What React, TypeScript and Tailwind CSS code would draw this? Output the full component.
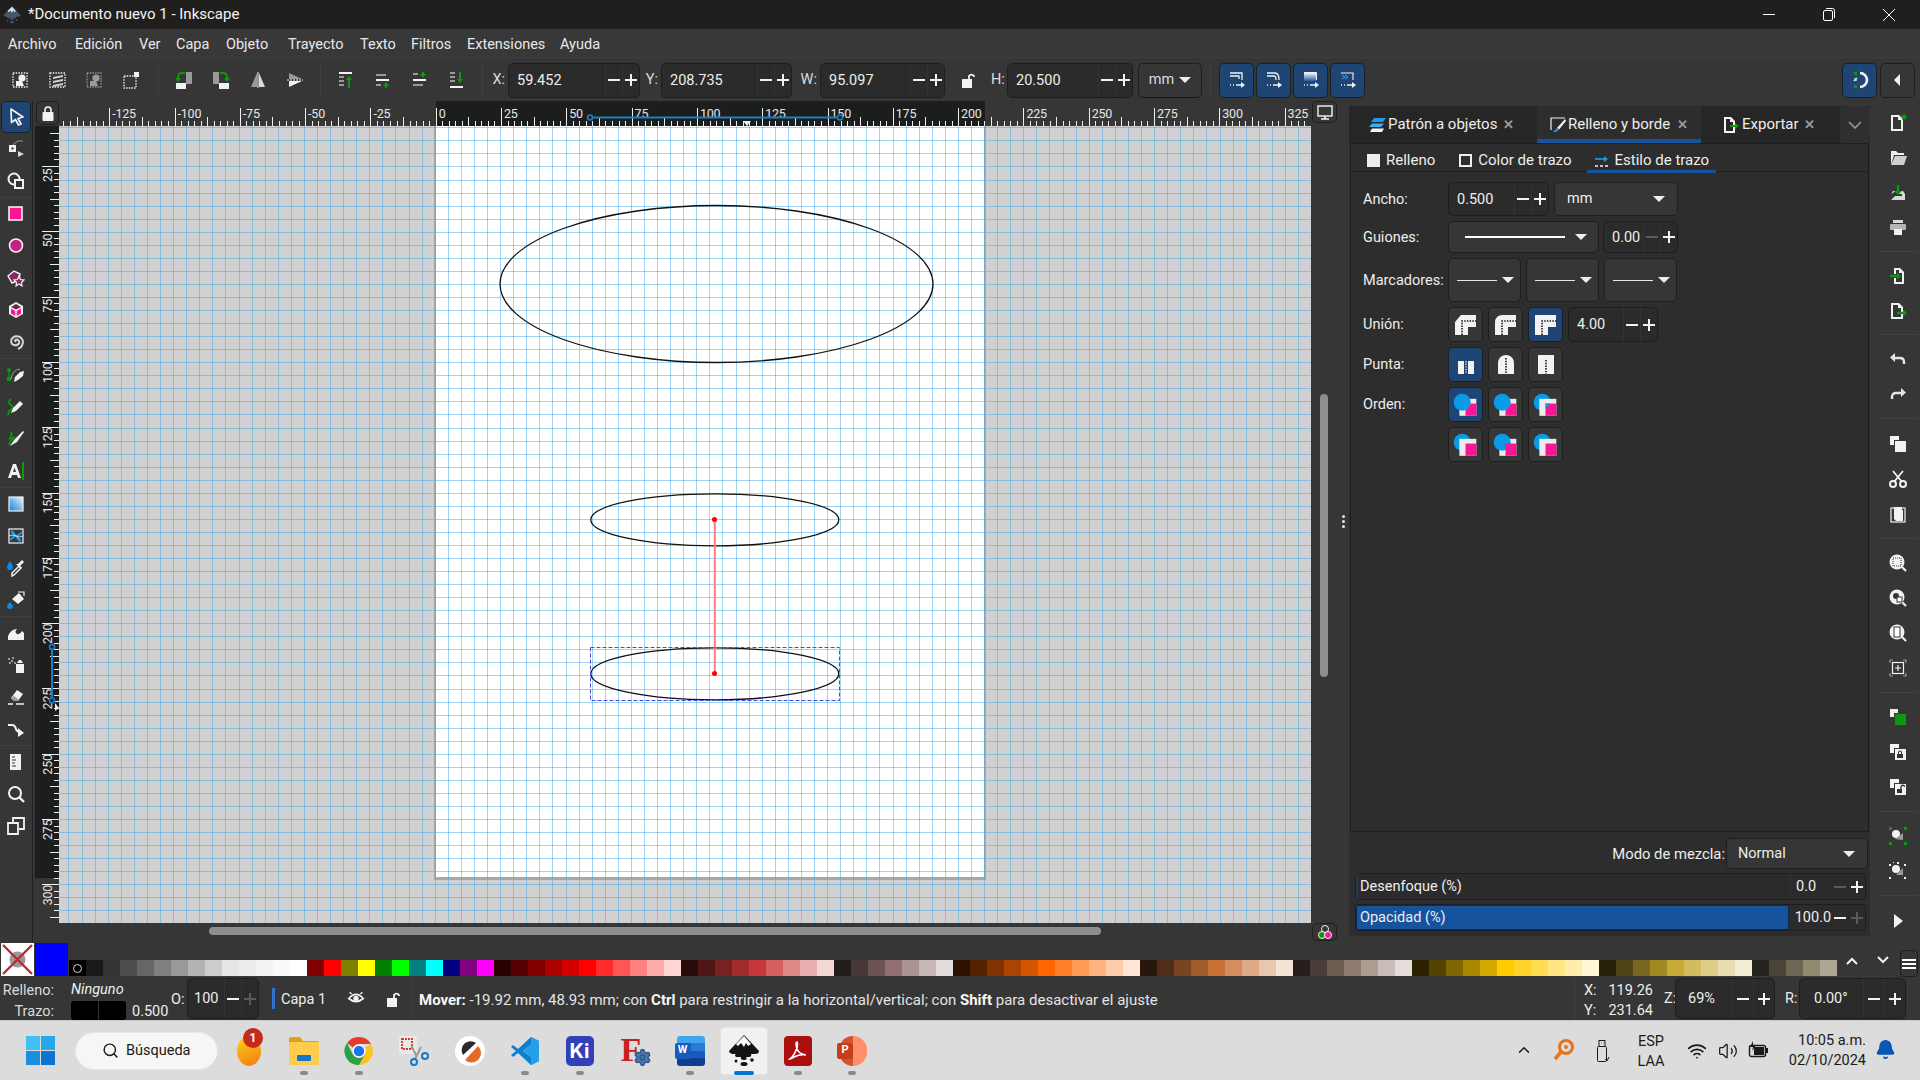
import React from 'react';
import { ChevronUp, Wifi, Volume2, Bell, Search, Settings } from 'lucide-react';

const W = '#f2f2f2';
const G = '#0a9a0a';
const GR = '#9a9a9a';

const Ico: React.FC<{ s?: number; children: React.ReactNode; v?: number }> = ({ s = 20, v = 20, children }) => (
  <svg width={s} height={s} viewBox={`0 0 ${v} ${v}`} fill="none">{children}</svg>
);

const Minus = ({ dim }: { dim?: boolean }) => (
  <div className={`w-[12px] h-[2px] ${dim ? 'bg-[#5a5a5a]' : 'bg-[#f2f2f2]'}`} />
);
const Plus = ({ dim }: { dim?: boolean }) => (
  <div className="relative w-[12px] h-[12px] flex items-center justify-center">
    <div className={`w-[12px] h-[2px] ${dim ? 'bg-[#5a5a5a]' : 'bg-[#f2f2f2]'}`} />
    <div className={`absolute w-[2px] h-[12px] ${dim ? 'bg-[#5a5a5a]' : 'bg-[#f2f2f2]'}`} />
  </div>
);

const Spin: React.FC<{ value: string; w: string; h?: string; pad?: string; cell?: string; decDim?: boolean; incDim?: boolean }> = ({ value, w, h = 'h-[35px]', pad = 'pl-[8px]', cell = 'w-[17px]', decDim, incDim }) => (
  <div className={`${w} ${h} flex items-stretch shrink-0 rounded-[5px] border border-[#1e1e1e] bg-[#2b2b2b] text-[14.5px] text-[#eeeeec]`}>
    <div className={`flex-1 flex items-center ${pad} pt-px min-w-0`}>{value}</div>
    <div className={`${cell} flex items-center justify-center border-l border-[#333333]`}><Minus dim={decDim} /></div>
    <div className={`${cell} flex items-center justify-center border-l border-[#333333]`}><Plus dim={incDim} /></div>
  </div>
);

const Caret = () => <div className="w-0 h-0 border-l-[6px] border-r-[6px] border-t-[6px] border-l-transparent border-r-transparent border-t-[#eeeeec]" />;

const TbBtn: React.FC<{ children: React.ReactNode; on?: boolean; w?: string; h?: string }> = ({ children, on, w = 'w-[35px]', h = 'h-[35px]' }) => (
  <div className={`${w} ${h} shrink-0 rounded-[5px] border flex items-center justify-center ${on ? 'bg-[#1f4575] border-[#17202c]' : 'bg-[#363636] border-[#1e1e1e]'}`}>{children}</div>
);

const Dot = ({ x, y, w, h, o = 1 }: { x: number; y: number; w: number; h: number; o?: number }) => (
  <rect x={x} y={y} width={w} height={h} stroke={W} strokeWidth="1.3" strokeDasharray="1.5 1.2" opacity={o} />
);

/* --- top toolbar icons --- */
const topIcons: React.ReactNode[] = [
  <Ico key="a"><Dot x={2} y={3} w={14} h={14} /><circle cx="11" cy="8" r="3.6" fill={W} /><path d="M5 16 V11 H11 L13 16Z" fill={W} /></Ico>,
  <Ico key="b"><Dot x={2} y={3} w={15} h={14} /><path d="M5 7 L15 5 V7 L5 9Z M5 11 L15 9 V11 L5 13Z M5 15 L15 13 V15 L5 17Z" fill="#d0d0d0" /></Ico>,
  <Ico key="c"><Dot x={2} y={3} w={14} h={14} o={0.5} /><circle cx="11" cy="8" r="3.6" fill={GR} /><path d="M5 16 V11 H11 L13 16Z" fill={GR} /></Ico>,
  <Ico key="d"><Dot x={2} y={6} w={12} h={12} /><rect x="12" y="2" width="5" height="5" fill={W} /></Ico>,
  <Ico key="e"><rect x="12" y="2" width="6" height="12" fill={GR} /><rect x="2" y="13" width="10" height="6" fill={W} /><path d="M11 3 H7 Q4 3 4 9" stroke={G} strokeWidth="2" /><path d="M1 8 H7 L4 12Z" fill={G} /></Ico>,
  <Ico key="f"><rect x="2" y="2" width="6" height="12" fill={GR} /><rect x="8" y="13" width="10" height="6" fill={W} /><path d="M9 3 H13 Q16 3 16 9" stroke={G} strokeWidth="2" /><path d="M13 8 H19 L16 12Z" fill={G} /></Ico>,
  <Ico key="g"><path d="M9 3 V17 H3Z" fill={GR} /><path d="M11 3 V17 H17Z" fill="#dcdcdc" /><path d="M10 2 V18" stroke={W} strokeWidth="1" /></Ico>,
  <Ico key="h"><path d="M4 9 V3 L17 9Z" fill={GR} /><path d="M4 11 V17 L17 11Z" fill={W} /><path d="M2 10 H18" stroke={W} strokeWidth="1" strokeDasharray="2 1" /></Ico>,
  <Ico key="i"><rect x="3" y="2" width="13" height="2" fill={W} /><path d="M3 7 h5 M3 11 h5 M3 15 h5" stroke={GR} strokeWidth="2" /><path d="M13 18 V9" stroke={G} strokeWidth="2" /><path d="M10 10 L13 6 L16 10Z" fill={G} /></Ico>,
  <Ico key="j"><rect x="3" y="9" width="13" height="2" fill={W} /><rect x="3" y="4" width="10" height="2" fill={GR} /><path d="M3 15 h5" stroke={GR} strokeWidth="2" /><path d="M13 18 V15" stroke={G} strokeWidth="2" /><path d="M10 16 L13 12 L16 16Z" fill={G} /></Ico>,
  <Ico key="k"><rect x="3" y="9" width="13" height="2" fill={W} /><rect x="3" y="14" width="10" height="2" fill={GR} /><path d="M3 4 h5" stroke={GR} strokeWidth="2" /><path d="M13 2 V5" stroke={G} strokeWidth="2" /><path d="M10 4 L13 8 L16 4Z" fill={G} /></Ico>,
  <Ico key="l"><rect x="3" y="16" width="13" height="2" fill={W} /><path d="M3 3 h5 M3 7 h5 M3 11 h5" stroke={GR} strokeWidth="2" /><path d="M13 2 V10" stroke={G} strokeWidth="2" /><path d="M10 9 L13 13 L16 9Z" fill={G} /></Ico>,
];

const blueIcons: React.ReactNode[] = [
  <Ico key="a"><path d="M3 3 H15 V10 M3 6 H12 V9" stroke={W} strokeWidth="1.3" /><path d="M3 15 h1 m2 0 h1 m2 0 h6" stroke={W} strokeWidth="1.6" /><path d="M14 12 L18 15 L14 18Z" fill={W} /></Ico>,
  <Ico key="b"><path d="M3 3 H11 Q15 3 15 10 M3 6 H10 Q12 6 12 10" stroke={W} strokeWidth="1.3" /><path d="M3 15 h1 m2 0 h1 m2 0 h6" stroke={W} strokeWidth="1.6" /><path d="M14 12 L18 15 L14 18Z" fill={W} /></Ico>,
  <Ico key="c"><defs><linearGradient id="bg1" x1="0" y1="1" x2="0" y2="0"><stop offset="0" stopColor="#1e5fa8" /><stop offset="1" stopColor="#f2f2f2" /></linearGradient></defs><rect x="3" y="3" width="12" height="8" fill="url(#bg1)" /><path d="M3 2.5 H15.5 V10" stroke={W} strokeWidth="1" /><path d="M3 15 h1 m2 0 h1 m2 0 h6" stroke={W} strokeWidth="1.6" /><path d="M14 12 L18 15 L14 18Z" fill={W} /></Ico>,
  <Ico key="d"><path d="M3 3 H15 V10" stroke={W} strokeWidth="1.1" /><path d="M4 5 L7 7 L4 9 M7 5 L10 7 L7 9" stroke="#3ea3ea" strokeWidth="1" /><path d="M3 15 h1 m2 0 h1 m2 0 h6" stroke={W} strokeWidth="1.6" /><path d="M14 12 L18 15 L14 18Z" fill={W} /></Ico>,
];

/* --- left toolbar icons --- */
const leftGroups: React.ReactNode[][] = [
  [
    <Ico key="sel"><path d="M5 2 L17 10 L12 11.5 L15 17 L12.5 18 L9.5 12.5 L5.5 15.5Z" fill="#1f4575" stroke={W} strokeWidth="1.7" strokeLinejoin="round" /></Ico>,
    <Ico key="node"><rect x="3" y="6" width="7" height="7" fill={W} /><rect x="5.5" y="8.5" width="2" height="2" fill="#333" /><path d="M7 6 Q10 1 17 2" stroke={GR} strokeWidth="1" /><path d="M12 12 L18 15 L12 18Z" fill="#d8d8d8" /></Ico>,
    <Ico key="shp"><circle cx="8" cy="8" r="5.5" stroke={W} strokeWidth="2" /><rect x="9" y="9" width="8" height="8" fill="#333" stroke={W} strokeWidth="2" /></Ico>,
  ],
  [
    <Ico key="rect"><rect x="3" y="3" width="13" height="13" fill="#ff1493" stroke={W} strokeWidth="1.6" /></Ico>,
    <Ico key="ell"><circle cx="10" cy="9.5" r="6.5" fill="#c4207f" stroke={W} strokeWidth="1.6" /></Ico>,
    <Ico key="star"><path d="M2 8 L8 3 L14 6 L13 12 L6 15Z" fill="#8a2465" stroke={W} strokeWidth="1.4" /><path d="M13 8 L14.5 11.5 L18 12 L15.5 14.5 L16 18 L13 16 L10 18 L10.5 14.5 L8 12 L11.5 11.5Z" fill="#8a2465" stroke={W} strokeWidth="1.2" /></Ico>,
    <Ico key="box"><path d="M10 2 L17 6 V14 L10 18 L3 14 V6Z" fill={W} /><path d="M10 4 L15 7 L10 9.5 L5 7Z" fill="#702255" /><path d="M5 8.5 L9.3 11 V16 L5 13.5Z" fill="#ff1493" /><path d="M15 8.5 L10.7 11 V16 L15 13.5Z" fill="#ff1493" /></Ico>,
    <Ico key="spi"><path d="M10 10 Q8 8 10.5 7.5 Q14 8 13 11.5 Q10 15 6 12 Q3.5 7 8.5 4.5 Q15 3.5 17 9 Q17 15 12 17" stroke="#d5d5d5" strokeWidth="2" /></Ico>,
  ],
  [
    <Ico key="pen"><rect x="1" y="12" width="4" height="4" fill={G} /><circle cx="3" cy="5" r="2" fill={G} /><path d="M3 6 V13" stroke={G} strokeWidth="1.2" /><path d="M5 14 Q6 5 14 4" stroke={GR} strokeWidth="1" /><path d="M8 17 L9 12 L14 7 L18 6 L17 11 L12 15Z" fill={W} /></Ico>,
    <Ico key="pcl"><path d="M5 2 Q1 5 5 8 Q9 11 3 14 L2 18" stroke={G} strokeWidth="1.8" /><path d="M5 16 L7 11 L14 4 L17 7 L10 14Z" fill={W} /></Ico>,
    <Ico key="cal"><path d="M5 3 Q7 8 3 10 M9 8 Q5 10 3 16" stroke={G} strokeWidth="1.8" /><path d="M4 17 L8 11 L17 2 L18 3 L11 13Z" fill={W} /></Ico>,
    <svg key="txt" width="20" height="20" viewBox="0 0 20 20" fill="none"><path d="M7 3 H10 L15 17 H12 L11 14 H6 L5 17 H2Z M7 11 H10 L8.5 6.5Z" fill={W} fillRule="evenodd" /><rect x="16" y="1" width="2" height="18" fill={G} /></svg>,
  ],
  [
    <Ico key="grd"><defs><linearGradient id="lg2" x1="1" y1="0" x2="0" y2="1"><stop offset="0" stopColor="#e8f6ff" /><stop offset="1" stopColor="#0f7fd8" /></linearGradient></defs><rect x="3" y="3" width="14" height="14" fill="url(#lg2)" stroke={W} strokeWidth="1.2" /></Ico>,
    <Ico key="msh"><rect x="3" y="3" width="14" height="14" fill="#2f3a44" stroke={W} strokeWidth="1.2" /><path d="M10 10 Q5 9 6 5 Q9 8 10 10 Q15 8 15.5 6 Q14 10 10 10 Q15 12 14 15.5 Q11 13 10 10 Q6 12 4.5 14 Q6 10 10 10Z" fill="#2a9fe8" stroke="#2a9fe8" strokeWidth="1.2" /><path d="M3 10 Q7 8 10 10 Q13 12 17 10" stroke={W} strokeWidth="0.8" /></Ico>,
    <Ico key="drp"><path d="M4 3 Q7 7 7 9 A3 3 0 0 1 1 9 Q1 7 4 3Z" fill="#1089e0" /><path d="M6 18 L6 15 L13 8 L15 10 L8 17Z" stroke={W} strokeWidth="1.5" /><path d="M12 6 L16 2 L18 4 L14 8 L16 10 L14 10 L10 6Z" fill={W} /></Ico>,
    <Ico key="bkt"><path d="M4 12 Q7 16 7 16 A3 3 0 0 1 1 16 Q1 15 4 12Z" fill="#1089e0" /><path d="M6 9 L13 3 L18 9 L12 14Z" fill={W} /><path d="M12 2 H18 L18 6" stroke={W} strokeWidth="1.2" /></Ico>,
  ],
  [
    <Ico key="twk"><path d="M2 17 V13 Q5 6 11 6 Q8 9 11 11 Q14 12 16 8 L18 10 V17Z" fill={W} /></Ico>,
    <Ico key="spr"><rect x="10" y="9" width="8" height="9" fill={W} /><path d="M11 8 L13 5 H15 L17 8Z" fill={W} /><path d="M2 3 h2 v2 h-2z M5 5 h2 v2 h-2z M3 7 h2 v2 h-2z M6 2 h2 v2 h-2z M8 7 h2 v2 h-2z" fill={GR} /></Ico>,
    <Ico key="ers"><path d="M5 11 L11 3 L17 7 L12 14 L8 14Z" fill={W} /><path d="M5 11 L8 14 L12 14 L13 13 L8 9Z" fill={GR} /><path d="M2 17 H7 M10 17 H18" stroke={W} strokeWidth="1.4" /></Ico>,
    <Ico key="con"><path d="M2 6 H6 Q9 6 10 10 Q11 13 14 13" stroke={W} strokeWidth="2.2" /><path d="M12 9 L18 14 L12 18Z" fill={W} /></Ico>,
  ],
  [
    <Ico key="pgs"><path d="M4 2 H15 V18 H4Z" fill={W} /><path d="M6 5 h3 M6 8 h4 M6 11 h3 M6 14 h4" stroke="#333" strokeWidth="1" /></Ico>,
    <Ico key="zm"><circle cx="9" cy="9" r="6" stroke={W} strokeWidth="2" /><path d="M13 13 L18 18" stroke={W} strokeWidth="2.4" /></Ico>,
    <Ico key="dp"><path d="M2 7 H12 V18 H2Z" stroke={W} strokeWidth="1.8" /><path d="M7 6 V2 H18 V13 H13" stroke={W} strokeWidth="1.8" /></Ico>,
  ],
];

/* --- right toolbar icons --- */
const Doc = () => <path d="M3 2 H11 L15 6 V18 H3Z M5 4 V16 H13 V7 H10 V4Z" fill={W} fillRule="evenodd" />;
const Copy2 = () => <path d="M2 2 H11 V6 H6 V11 H2Z M7 7 H18 V18 H7Z" fill={W} />;
const Mag = ({ children }: { children?: React.ReactNode }) => (
  <><circle cx="9" cy="9" r="7.5" fill={W} /><path d="M14 14 L18 18" stroke={W} strokeWidth="2.2" />{children}</>
);
const rightGroups: { sep: string; items: React.ReactNode[] }[] = [
  { sep: '', items: [
    <Ico key="n"><Doc /><path d="M16 0 L17 2.5 L19.5 3 L17.5 5 L18 7.5 L16 6 L14 7.5 L14.5 5 L12.5 3 L15 2.5Z" fill={G} /></Ico>,
    <Ico key="o"><path d="M3 3 H8 L10 5 H16 V7 H6 L3 17Z" fill={W} /><path d="M7 8 H19 L16 17 H3Z" fill="#cfcfcf" /></Ico>,
    <Ico key="s"><path d="M3 11 L5 8 H8 M12 8 H15 L17 11 V17 H3Z" fill="#dadada" /><path d="M6 11 h8 v2 h-8z" fill="#333" /><path d="M10 2 V9" stroke={G} strokeWidth="2.4" /><path d="M6 8 H14 L10 12Z" fill={G} /></Ico>,
    <Ico key="p"><rect x="5" y="2" width="10" height="3" fill="#dadada" /><rect x="2" y="6" width="16" height="6" rx="1" fill="#b5b5b5" /><rect x="6" y="11" width="8" height="6" fill={W} /></Ico>,
  ] },
  { sep: 'h-[13px]', items: [
    <Ico key="im"><path d="M6 8 V2 H12 L16 6 V18 H6 V12 H8 V16 H14 V7 H11 V4 H8 V8Z" fill={W} /><path d="M2 10 H10" stroke={G} strokeWidth="2.4" /><path d="M9 6.5 L13 10 L9 13.5Z" fill={G} /></Ico>,
    <Ico key="ex"><Doc /><path d="M9 12 H16" stroke={G} strokeWidth="2.4" /><path d="M15 8.5 L19 12 L15 15.5Z" fill={G} /></Ico>,
  ] },
  { sep: 'h-[13px]', items: [
    <Ico key="u"><path d="M6 9 H12 Q16 9 16 13 L16 15" stroke="#e4e4e4" strokeWidth="2.4" /><path d="M7 4 L2 8.5 L7 13Z" fill="#e4e4e4" /></Ico>,
    <Ico key="r"><path d="M14 9 H8 Q4 9 4 13 L4 15" stroke="#e4e4e4" strokeWidth="2.4" /><path d="M13 4 L18 8.5 L13 13Z" fill="#e4e4e4" /></Ico>,
  ] },
  { sep: 'h-[15px]', items: [
    <Ico key="cp"><Copy2 /></Ico>,
    <Ico key="ct"><circle cx="5" cy="15" r="3" stroke={W} strokeWidth="2" /><circle cx="15" cy="15" r="3" stroke={W} strokeWidth="2" /><path d="M6 13 L15 2 M14 13 L5 2" stroke={W} strokeWidth="1.8" /></Ico>,
    <Ico key="pt"><rect x="3" y="4" width="14" height="14" stroke={W} strokeWidth="1.2" /><path d="M6 3 H14 V6 H15 V17 H8 L6 15Z" fill={W} /></Ico>,
  ] },
  { sep: 'h-[14px]', items: [
    <Ico key="z1"><Mag><rect x="5" y="5" width="8" height="8" stroke="#333" strokeWidth="1" strokeDasharray="1 1" /></Mag></Ico>,
    <Ico key="z2"><Mag><circle cx="8" cy="8" r="3" fill="#333" /><rect x="9" y="9" width="5" height="5" fill="#fff" stroke="#333" /></Mag></Ico>,
    <Ico key="z3"><Mag><rect x="6" y="4" width="6" height="10" fill="#fff" stroke="#333" /></Mag></Ico>,
    <Ico key="z4"><path d="M2 5 V2 H5 M15 2 H18 V5 M2 15 V18 H5 M15 18 H18 V15" stroke="#9a9a9a" strokeWidth="1.2" /><rect x="4.5" y="4.5" width="11" height="11" stroke={W} strokeWidth="1.2" /><path d="M7 10 H13 M10 7 V13" stroke={W} strokeWidth="1.2" /></Ico>,
  ] },
  { sep: 'h-[14px]', items: [
    <Ico key="d1"><path d="M2 2 H10 V6 H6 V10 H2Z" fill={W} /><rect x="7" y="7" width="11" height="11" fill={G} /></Ico>,
    <Ico key="d2"><Copy2 /><path d="M10 12 V10.5 A2 2 0 0 1 14 10.5 V12 H15 V16 H9 V12Z M11 12 H13 V10.5 A1 1 0 0 0 11 10.5Z" fill="#333" fillRule="evenodd" /></Ico>,
    <Ico key="d3"><Copy2 /><path d="M9 12 H14 V16 H9Z" fill="#333" /><path d="M13 12 V10 A1.7 1.7 0 0 1 16.5 10" stroke="#333" strokeWidth="1.3" /></Ico>,
  ] },
  { sep: 'h-[14px]', items: [
    <Ico key="g1"><path d="M1 1 h3 v3 h-3z M16 1 h3 v3 h-3z M1 16 h3 v3 h-3z M16 16 h3 v3 h-3z" fill={G} /><circle cx="8" cy="8" r="4" fill={W} /><path d="M7 13 L15 7 V14Z" fill="#9a9a9a" /></Ico>,
    <Ico key="g2"><path d="M1 3 h2 v2 h-2z M16 3 h2 v2 h-2z M1 16 h2 v2 h-2z M16 16 h2 v2 h-2z M9 1 h2 v2 h-2z M5 1 h1 v1 h-1z" fill={W} /><circle cx="8" cy="8" r="4" fill={W} /><path d="M8 14 L15 7 V14Z" fill="#9a9a9a" /></Ico>,
  ] },
  { sep: 'h-[15px]', items: [
    <Ico key="ar"><path d="M6 3 L15 10 L6 17Z" fill={W} /></Ico>,
  ] },
];

/* --- stroke style icons --- */
const Join = ({ kind }: { kind: 'bevel' | 'round' | 'miter' }) => {
  const outer = kind === 'bevel' ? 'M1 22 V9 L7 2 H22 V14 H14 V22Z' : kind === 'round' ? 'M1 22 V10 Q1 2 9 2 H22 V14 H14 V22Z' : 'M1 22 V2 H22 V14 H14 V22Z';
  return (
    <svg width="23" height="23" viewBox="0 0 23 23" fill="none">
      <path d={outer} fill={W} />
      <path d="M8 22 V8 H22" stroke="#1a1a1a" strokeWidth="1.6" strokeDasharray="1.5 1.2" />
    </svg>
  );
};
const Cap = ({ kind }: { kind: 'butt' | 'round' | 'square' }) => (
  <svg width="18" height="23" viewBox="0 0 18 23" fill="none">
    {kind === 'butt' && <><rect x="1" y="8" width="6" height="13" fill={W} /><rect x="11" y="8" width="6" height="13" fill={W} /><path d="M9 8 V21" stroke={W} strokeWidth="1.2" strokeDasharray="1.4 1.2" /></>}
    {kind === 'round' && <><path d="M1 21 V10 A8 8 0 0 1 17 10 V21Z" fill={W} /><path d="M9 5 V21" stroke="#1a1a1a" strokeWidth="1.6" strokeDasharray="1.5 1.2" /></>}
    {kind === 'square' && <><rect x="1" y="2" width="16" height="19" fill={W} /><path d="M9 7 V21" stroke="#1a1a1a" strokeWidth="1.6" strokeDasharray="1.5 1.2" /></>}
  </svg>
);
const Order = ({ v }: { v: number }) => {
  const circle = <circle cx="14" cy="15" r="9" fill="#0a9ae6" key="c" />;
  const white = <rect x="11" y="11.5" width="18" height="18" fill="#ececec" key="w" />;
  const pink = <rect x="17.5" y="16.5" width="11.5" height="13" fill="#ff1493" key="p" />;
  const wedge = <path d="M17.5 16.5 H23 L17.5 22Z" fill="#0a9ae6" key="t" />;
  const layers = [
    [white, pink, circle],
    [white, pink, circle],
    [circle, white, pink, wedge],
    [circle, white, pink],
    [white, circle, pink],
    [circle, white, pink],
  ][v];
  return <svg width="35" height="35" viewBox="0 0 35 35">{layers}</svg>;
};

/* --- rulers and canvas --- */
const RulerH = () => {
  const pos = (u: number) => 435.7 + u * 2.612;
  const ticks: React.ReactNode[] = [];
  for (let u = -147.5; u <= 335; u += 2.5) {
    const x = Math.round(pos(u)) + 0.5;
    const mod = ((u % 25) + 25) % 25;
    const y1 = mod === 0 ? 108 : mod === 12.5 ? 117 : 121;
    ticks.push(<line key={u} x1={x} x2={x} y1={y1} y2={126} stroke="#f0f0f0" strokeWidth="1" />);
  }
  const labels: React.ReactNode[] = [];
  for (let u = -125; u <= 325; u += 25) labels.push(<text key={u} x={pos(u) + 3} y={118} fontSize="12.5" fill="#e6e6e6" letterSpacing="-0.2">{u}</text>);
  return (
    <svg width="1252" height="25" viewBox="59 101 1252 25" className="block shrink-0">
      <rect x="59" y="101" width="1252" height="25" fill="#363636" />
      <rect x="436" y="101" width="549" height="25" fill="#1c1e1e" />
      {ticks}{labels}
      <path d="M590 117.5 H840" stroke="#1a7fc4" strokeWidth="2" />
      <circle cx="590" cy="117.5" r="2.5" fill="#1c1e1e" stroke="#1a7fc4" strokeWidth="1.6" />
      <circle cx="840" cy="117.5" r="2.5" fill="#1c1e1e" stroke="#1a7fc4" strokeWidth="1.6" />
      <path d="M743 121 H751 L747 126Z" fill="#f0f0f0" />
    </svg>
  );
};
const RulerV = () => {
  const pos = (u: number) => 100.7 + u * 2.612;
  const ticks: React.ReactNode[] = [];
  for (let u = 12.5; u <= 315; u += 2.5) {
    const y = Math.round(pos(u)) + 0.5;
    const mod = u % 25;
    const x1 = mod === 0 ? 42 : mod === 12.5 ? 50 : 54;
    ticks.push(<line key={u} x1={x1} x2={59} y1={y} y2={y} stroke="#f0f0f0" strokeWidth="1" />);
  }
  const labels: React.ReactNode[] = [];
  for (let u = 25; u <= 300; u += 25) {
    const y = pos(u) + 2;
    labels.push(<text key={u} transform={`translate(51.5 ${y + (u >= 100 ? 19 : 14)}) rotate(-90)`} fontSize="12.5" fill="#e6e6e6" letterSpacing="-0.2">{u}</text>);
  }
  return (
    <svg width="24" height="797" viewBox="35 126 24 797" className="block shrink-0">
      <rect x="35" y="126" width="24" height="797" fill="#363636" />
      <rect x="35" y="126" width="24" height="752" fill="#1c1e1e" />
      {ticks}{labels}
      <path d="M52 647 V700" stroke="#1a7fc4" strokeWidth="2" />
      <circle cx="52" cy="647" r="2.5" fill="#1c1e1e" stroke="#1a7fc4" strokeWidth="1.6" />
      <circle cx="52" cy="700.5" r="2.5" fill="#1c1e1e" stroke="#1a7fc4" strokeWidth="1.6" />
      <path d="M55 703 L59 708 L55 711Z" fill="#f0f0f0" />
    </svg>
  );
};
const CanvasArea = () => {
  const vs = Array.from({ length: 98 }, (_, i) => Math.floor(448.3 + (i - 30) * 13.08) + 0.5);
  const hs = Array.from({ length: 62 }, (_, i) => Math.floor(480.2 + (i - 28) * 13.05) + 0.5);
  return (
    <svg width="1252" height="797" viewBox="59 126 1252 797" className="block shrink-0">
      <rect x="59" y="126" width="1252" height="797" fill="#d0d0d0" />
      <rect x="434" y="120" width="552" height="760" fill="#a8a8a8" />
      <rect x="436" y="101" width="548" height="776" fill="#ffffff" />
      {vs.map((x) => <line key={x} x1={x} x2={x} y1={126} y2={923} stroke="#3fa9e8" strokeOpacity="0.5" strokeWidth="1" />)}
      {hs.map((y) => <line key={y} x1={59} x2={1311} y1={y} y2={y} stroke="#3fa9e8" strokeOpacity="0.5" strokeWidth="1" />)}
      <ellipse cx="716.5" cy="284" rx="216.5" ry="78.5" stroke="#111" strokeWidth="1.3" fill="none" />
      <ellipse cx="714.8" cy="519.8" rx="124" ry="26" stroke="#111" strokeWidth="1.3" fill="none" />
      <ellipse cx="714.8" cy="673.8" rx="124" ry="26" stroke="#111" strokeWidth="1.3" fill="none" />
      <line x1="714.8" x2="714.8" y1="519" y2="673" stroke="#ff7a84" strokeWidth="2" />
      <circle cx="714.5" cy="519.5" r="2.5" fill="#ff0000" />
      <circle cx="714.5" cy="673.5" r="2.5" fill="#ff0000" />
      <rect x="590.5" y="647.5" width="249" height="53" fill="none" stroke="#4b4bd8" strokeWidth="1" strokeDasharray="4 2" />
    </svg>
  );
};

/* --- palette --- */
const PALETTE = [
  '#000000','#1a1a1a','#333333','#4d4d4d','#666666','#808080','#999999','#b3b3b3','#cccccc','#e6e6e6','#ececec','#f2f2f2','#f9f9f9','#ffffff',
  '#800000','#ff0000','#808000','#ffff00','#008000','#00ff00','#008080','#00ffff','#000080','#800080','#ff00ff',
  '#2b0000','#550000','#800000','#aa0000','#d40000','#ff0000','#ff2a2a','#ff5555','#ff8080','#ffaaaa','#ffd5d5',
  '#280b0b','#501616','#782121','#a02c2c','#c83737','#d35f5f','#de8787','#e9afaf','#f4d7d7',
  '#241c1c','#483737','#6c5353','#916f6f','#ac9393','#c8b7b7','#e3dbdb',
  '#2b1100','#552200','#803300','#aa4400','#d45500','#ff6600','#ff7f2a','#ff9955','#ffb380','#ffccaa','#ffe6d5',
  '#28170b','#502d16','#784421','#a05a2c','#c87137','#d38d5f','#deaa87','#e9c6af','#f4e3d7',
  '#241f1c','#483e37','#6c5d53','#917c6f','#ac9d93','#c8beb7','#e3dedb',
  '#2b2200','#554400','#806600','#aa8800','#d4aa00','#ffcc00','#ffd42a','#ffdd55','#ffe680','#ffeeaa','#fff6d5',
  '#28220b','#504416','#786721','#a08921','#c8ab37','#d3bc5f','#decd87','#e9ddaf','#f4eed7',
  '#24221c','#484537','#6c6753','#918a6f','#aca793',
];

const MENUS: [string, string][] = [
  ['Archivo', 'w-[67px]'], ['Edición', 'w-[64px]'], ['Ver', 'w-[37px]'], ['Capa', 'w-[50px]'], ['Objeto', 'w-[62px]'],
  ['Trayecto', 'w-[72px]'], ['Texto', 'w-[51px]'], ['Filtros', 'w-[56px]'], ['Extensiones', 'w-[93px]'], ['Ayuda', 'w-[60px]'],
];

/* --- taskbar --- */
const InkLogo = ({ s = 36, top = '#ffffff', body = '#141414' }: { s?: number; top?: string; body?: string }) => (
  <svg width={s} height={s} viewBox="0 0 36 36">
    <path d="M18 2 L33 18 Q33 21 29 21 H25 Q26 24 23 24 H20 Q22 27 18 27 Q14 27 15 24 H10 Q8 22 10 21 H6 Q3 20 3 18Z" fill={body} />
    <path d="M18 3 L25 11 L22 13 L20 10 L18 14 L15 10 L12 13 L10 11Z" fill={top} />
    <ellipse cx="18" cy="31" rx="3.5" ry="2" fill={body} />
    <circle cx="26" cy="27" r="1.8" fill={body} />
    <circle cx="10" cy="28" r="1.5" fill={body} />
  </svg>
);

const TaskIcon: React.FC<{ w: string; children: React.ReactNode; dot?: boolean; active?: boolean }> = ({ w, children, dot, active }) => (
  <div className={`${w} h-[48px] shrink-0 relative flex items-center justify-center rounded-[4px] ${active ? 'bg-[#f1f1f1] border border-[#e4e4e4]' : ''}`}>
    {children}
    {dot && <div className="absolute bottom-0 left-1/2 -translate-x-1/2 w-[8px] h-[4px] rounded-full bg-[#8a8a8a]" />}
    {active && <div className="absolute -bottom-px left-1/2 -translate-x-1/2 w-[20px] h-[4px] rounded-full bg-[#0078d4]" />}
  </div>
);

export default function App() {
  return (
    <div className="w-[1920px] h-[1080px] overflow-hidden flex flex-col bg-[#363636] text-[#eeeeec] font-['Roboto',sans-serif] text-[14.5px]">
      {/* title bar */}
      <div className="h-[29px] shrink-0 bg-[#201f1d] flex items-center text-[15px] text-[#f4f4f4]">
        <div className="w-[28px] pl-[2px] shrink-0 flex"><InkLogo s={20} top="#d5deea" body="#46566a" /></div>
        <span>*Documento nuevo 1 - Inkscape</span>
        <div className="ml-auto flex items-center text-white">
          <div className="w-[60px] flex justify-center"><div className="w-[12px] h-px bg-white" /></div>
          <div className="w-[60px] flex justify-center"><svg width="12" height="13" viewBox="0 0 12 13" fill="none" stroke="#fff"><rect x="0.5" y="2.5" width="9" height="10" rx="1.5" /><path d="M3 0.5 H9.5 Q11.5 0.5 11.5 2.5 V10" /></svg></div>
          <div className="w-[60px] flex justify-center mr-px"><svg width="12" height="12" viewBox="0 0 12 12" stroke="#fff"><path d="M0 0 L12 12 M12 0 L0 12" /></svg></div>
        </div>
      </div>
      {/* menu */}
      <div className="h-[28px] shrink-0 bg-[#383838] flex items-center pl-[8px] pt-[4px] text-[14.5px] text-[#e8e8e8]">
        {MENUS.map(([m, w]) => <span key={m} className={w}>{m}</span>)}
      </div>
      {/* command bar */}
      <div className="h-[44px] shrink-0 bg-[#363636] border-t border-[#3d3d3d] flex items-center pl-[2px] pt-[1px]">
        {topIcons.slice(0, 4).map((ic, i) => <div key={i} className="w-[37px] flex justify-center">{ic}</div>)}
        <div className="ml-[8px] w-px h-[30px] bg-[#3f3f3f]" />
        <div className="ml-[6px] flex">{topIcons.slice(4, 8).map((ic, i) => <div key={i} className="w-[37px] flex justify-center">{ic}</div>)}</div>
        <div className="ml-[7px] w-px h-[30px] bg-[#3f3f3f]" />
        <div className="ml-[6px] flex">{topIcons.slice(8, 12).map((ic, i) => <div key={i} className="w-[37px] flex justify-center">{ic}</div>)}</div>
        <div className="ml-[7px] w-px h-[30px] bg-[#3f3f3f]" />
        <div className="w-[25px] text-right pr-[3px] text-[#dcdcdc]">X:</div>
        <Spin value="59.452" w="w-[132px]" />
        <div className="w-[21px] text-right pr-[3px] text-[#dcdcdc]">Y:</div>
        <Spin value="208.735" w="w-[131px]" />
        <div className="w-[28px] text-right pr-[3px] text-[#dcdcdc]">W:</div>
        <Spin value="95.097" w="w-[125px]" />
        <div className="w-[46px] flex justify-center">
          <svg width="14" height="18" viewBox="0 0 14 18"><rect x="1" y="8" width="10" height="9" fill={W} /><path d="M8 8 V5 A3 3 0 0 1 13 5 V6" stroke={W} strokeWidth="1.8" fill="none" /></svg>
        </div>
        <div className="w-[16px] text-[#dcdcdc]">H:</div>
        <Spin value="20.500" w="w-[126px]" />
        <div className="ml-[5px] w-[64px] h-[35px] rounded-[5px] border border-[#1e1e1e] border-b-[#151515] bg-[#363636] flex items-center justify-center gap-[5px] text-[#dcdcdc]"><span>mm</span><Caret /></div>
        <div className="ml-[8px] w-px h-[30px] bg-[#3f3f3f]" />
        <div className="ml-[8px] flex gap-[2px]">{blueIcons.map((ic, i) => <TbBtn key={i} on>{ic}</TbBtn>)}</div>
        <div className="ml-auto mr-[5px] flex gap-[3px]">
          <TbBtn on>
            <Ico><path d="M10 3 A7 7 0 0 1 10 17" stroke={W} strokeWidth="2.6" /><path d="M4 2 h3 v3 h-3z M4 15 h3 v3 h-3z" fill={G} /><path d="M4 9 l3 -1 v1 l-3 1 v1 l3 -1" stroke={W} strokeWidth="0.8" /></Ico>
          </TbBtn>
          <TbBtn><Ico><path d="M12 4 L6 10 L12 16Z" fill={W} /></Ico></TbBtn>
        </div>
      </div>
      {/* workspace */}
      <div className="h-[842px] shrink-0 flex bg-[#363636]">
        {/* tool column */}
        <div className="w-[33px] shrink-0 border-r border-[#222222] flex flex-col">
          {leftGroups.map((grp, gi) => (
            <div key={gi} className={gi ? 'border-t border-[#3f3f3f]' : ''}>
              {grp.map((ic, i) => (
                <div key={i} className={`h-[32px] flex items-center justify-center ${gi === 0 && i === 0 ? 'bg-[#1f4575] rounded-[5px] mx-px border border-[#17202c]' : ''}`}>{ic}</div>
              ))}
            </div>
          ))}
        </div>
        {/* canvas column */}
        <div className="w-[1316px] shrink-0 flex flex-col pl-[2px]">
          <div className="h-[25px] flex">
            <div className="w-[24px] pl-px">
              <div className="w-[23px] h-[24px] bg-[#363636] border border-[#1e1e1e] rounded-[5px] flex items-center justify-center">
                <svg width="12" height="15" viewBox="0 0 12 15"><rect x="0.5" y="6" width="11" height="9" rx="1" fill={W} /><path d="M3 6 V4 A3 3 0 0 1 9 4 V6" stroke={W} strokeWidth="1.6" fill="none" /></svg>
              </div>
            </div>
            <RulerH />
            <div className="ml-px w-[25px] h-[22px] rounded-[5px] border border-[#1e1e1e] flex items-center justify-center">
              <svg width="16" height="15" viewBox="0 0 16 15" fill="none"><rect x="1" y="1" width="14" height="10" stroke={W} strokeWidth="1.4" /><path d="M4 14 H12 M8 11 V14" stroke={W} strokeWidth="1.6" /></svg>
            </div>
          </div>
          <div className="h-[797px] flex">
            <RulerV />
            <CanvasArea />
            <div className="w-[38px] flex">
              <div className="ml-[9px] mt-[268px] w-[8px] h-[283px] rounded-full bg-[#8e8e8e]" />
              <div className="ml-[14px] mt-[389px] flex flex-col gap-[2px]">
                <div className="w-[3px] h-[3px] rounded-full bg-[#e6e6e6]" />
                <div className="w-[3px] h-[3px] rounded-full bg-[#e6e6e6]" />
                <div className="w-[3px] h-[3px] rounded-full bg-[#e6e6e6]" />
              </div>
            </div>
          </div>
          <div className="h-[18px] flex">
            <div className="ml-[174px] mt-[4px] w-[892px] h-[8px] rounded-full bg-[#8e8e8e]" />
            <div className="ml-[211px] w-[25px] h-[18px] rounded-[5px] border border-[#1e1e1e] flex items-center justify-center">
              <svg width="16" height="16" viewBox="0 0 16 16" fill="none"><circle cx="8" cy="5" r="3.5" stroke={W} /><circle cx="5" cy="11" r="3.5" fill={G} stroke={W} /><circle cx="11" cy="11" r="3.5" fill="#ff1493" stroke={W} /></svg>
            </div>
          </div>
        </div>
        {/* dock */}
        <div className="w-[521px] h-[830px] mt-[5px] shrink-0 bg-[#2d2d2d] flex flex-col">
          <div className="h-[37px] flex items-stretch text-[15px] bg-[#262626]">
            <div className="w-[188px] bg-[#262626] flex items-center pl-[20px]">
              <svg width="18" height="18" viewBox="0 0 18 18"><path d="M5 2 H17 L14 6 H2Z" fill="#1e9ae6" /><path d="M3 7.5 H15 L12 11 H0Z" fill="#3ab0f2" /><path d="M3 12.5 H15 L13 16 H1Z" fill={W} /></svg>
              <span className="ml-px">Patrón a objetos</span>
              <span className="ml-[6px] text-[#9a9a9a] font-bold text-[13px] leading-none">✕</span>
            </div>
            <div className="w-[164px] bg-[#2d2d2d] border-b-[4px] border-[#15539e] flex items-center pl-[12px] pt-[4px]">
              <svg width="18" height="18" viewBox="0 0 18 18" fill="none"><path d="M2 14 V2 H16" stroke={W} strokeWidth="1.2" /><path d="M16 3 L8 12 L10 13.5 L17 5Z" fill={W} /><path d="M4 16 L8 12 L10 13.5 L7 16Z" fill="#1e9ae6" /></svg>
              <span className="ml-px">Relleno y borde</span>
              <span className="ml-[7px] text-[#9a9a9a] font-bold text-[13px] leading-none">✕</span>
            </div>
            <div className="w-[139px] bg-[#262626] flex items-center pl-[21px]">
              <svg width="18" height="18" viewBox="0 0 18 18"><path d="M2 1 H9 L13 5 V17 H2Z M4 3 V15 H11 V6 H8 V3Z" fill={W} fillRule="evenodd" /><path d="M8 10 H14" stroke={G} strokeWidth="2" /><path d="M13 7 L17 10 L13 13Z" fill={G} /></svg>
              <span className="ml-[2px]">Exportar</span>
              <span className="ml-[5px] text-[#9a9a9a] font-bold text-[13px] leading-none">✕</span>
            </div>
            <div className="w-[30px] bg-[#2f2f2f] flex items-center justify-center rounded-[4px]">
              <svg width="14" height="8" viewBox="0 0 14 8" fill="none"><path d="M1 1 L7 7 L13 1" stroke="#9a9a9a" strokeWidth="1.6" /></svg>
            </div>
          </div>
          <div className="h-[689px] mx-px border border-[#1f1f1f] border-b-[#1f1f1f]">
            <div className="h-[28px] border-b border-[#1f1f1f] flex items-center relative text-[15px] pt-[6px]">
              <div className="ml-[16px] w-[13px] h-[13px] bg-[#ededed]" />
              <span className="ml-[6px]">Relleno</span>
              <div className="ml-[24px] w-[13px] h-[13px] border-2 border-[#ededed] bg-[#2d2d2d]" />
              <span className="ml-[6px]">Color de trazo</span>
              <div className="ml-[22px]">
                <svg width="15" height="14" viewBox="0 0 15 14"><path d="M1 5 H11" stroke="#1e9ae6" strokeWidth="1.6" /><path d="M10 2 L14 5 L10 8Z" fill="#1e9ae6" /><path d="M1 12 H4 M6 12 H9 M11 12 H14" stroke={W} strokeWidth="1.6" /></svg>
              </div>
              <span className="ml-[6px]">Estilo de trazo</span>
              <div className="absolute left-[236px] bottom-[-2px] w-[129px] h-[3px] bg-[#15539e]" />
            </div>
            <div className="pt-[10px] pl-[12px] flex flex-col gap-[5px]">
              <div className="h-[34px] flex items-center">
                <div className="w-[85px] pt-px">Ancho:</div>
                <Spin value="0.500" w="w-[101px]" h="h-[34px]" />
                <div className="ml-[5px] w-[124px] h-[34px] rounded-[5px] border border-[#1e1e1e] bg-[#363636] flex items-center justify-between px-[12px]"><span>mm</span><Caret /></div>
              </div>
              <div className="h-[32px] flex items-center">
                <div className="w-[85px] pt-px">Guiones:</div>
                <div className="w-[151px] h-[32px] rounded-[5px] border border-[#1e1e1e] bg-[#363636] flex items-center pl-[16px] gap-[10px]"><div className="w-[100px] h-[2px] bg-white" /><Caret /></div>
                <div className="ml-[4px]"><Spin value="0.00" w="w-[75px]" h="h-[32px]" decDim /></div>
              </div>
              <div className="h-[44px] flex items-center">
                <div className="w-[85px] pt-px">Marcadores:</div>
                <div className="flex gap-[5px]">
                  {[0, 1, 2].map((i) => (
                    <div key={i} className="w-[73px] h-[44px] rounded-[5px] border border-[#1e1e1e] bg-[#363636] flex items-center pl-[8px] gap-[5px]"><div className="w-[40px] h-px bg-[#e6e6e6]" /><Caret /></div>
                  ))}
                </div>
              </div>
              <div className="h-[35px] flex items-center">
                <div className="w-[85px] pt-px">Unión:</div>
                <div className="flex gap-[5px]">
                  <TbBtn><Join kind="bevel" /></TbBtn>
                  <TbBtn><Join kind="round" /></TbBtn>
                  <TbBtn on><Join kind="miter" /></TbBtn>
                </div>
                <div className="ml-[5px]"><Spin value="4.00" w="w-[90px]" /></div>
              </div>
              <div className="h-[35px] flex items-center">
                <div className="w-[85px] pt-px">Punta:</div>
                <div className="flex gap-[5px]">
                  <TbBtn on><Cap kind="butt" /></TbBtn>
                  <TbBtn><Cap kind="round" /></TbBtn>
                  <TbBtn><Cap kind="square" /></TbBtn>
                </div>
              </div>
              <div className="h-[35px] flex items-center">
                <div className="w-[85px] pt-px">Orden:</div>
                <div className="flex gap-[5px]">
                  <TbBtn on><Order v={0} /></TbBtn>
                  <TbBtn><Order v={1} /></TbBtn>
                  <TbBtn><Order v={2} /></TbBtn>
                </div>
              </div>
              <div className="h-[35px] flex items-center pl-[85px] gap-[5px]">
                <TbBtn><Order v={3} /></TbBtn>
                <TbBtn><Order v={4} /></TbBtn>
                <TbBtn><Order v={5} /></TbBtn>
              </div>
            </div>
          </div>
          <div className="flex-1 pt-[6px] pl-[6px] pr-[4px] flex flex-col gap-[4px]">
            <div className="h-[31px] flex items-center justify-end">
              <span className="mr-px text-[14.8px] pt-px">Modo de mezcla:</span>
              <div className="w-[142px] h-[31px] mr-[-2px] rounded-[5px] border border-[#1e1e1e] bg-[#363636] flex items-center justify-between pl-[11px] pr-[12px]"><span className="pt-px">Normal</span><Caret /></div>
            </div>
            <div className="h-[27px] flex rounded-[4px] border border-[#1e1e1e] bg-[#2b2b2b]">
              <div className="w-[434px] flex items-center pl-[2px] pt-px border-l-2 border-[#15539e]/40">Desenfoque (%)</div>
              <div className="flex-1 flex items-center pl-[5px] pt-px border-l border-[#333333]">0.0</div>
              <div className="w-[17px] flex items-center justify-center"><Minus dim /></div>
              <div className="w-[17px] flex items-center justify-center"><Plus /></div>
            </div>
            <div className="h-[27px] flex rounded-[4px] border border-[#1e1e1e] bg-[#2b2b2b]">
              <div className="w-[434px] flex items-center pl-[3px] pt-px bg-[#15539e] border border-[#0f2a4d]">Opacidad (%)</div>
              <div className="flex-1 flex items-center pl-[6px] pt-px">100.0</div>
              <div className="w-[17px] flex items-center justify-center"><Minus /></div>
              <div className="w-[17px] flex items-center justify-center"><Plus dim /></div>
            </div>
          </div>
        </div>
        {/* commands */}
        <div className="w-[50px] shrink-0 pt-[4px] flex flex-col">
          {rightGroups.map((grp, gi) => (
            <div key={gi} className="flex flex-col">
              {grp.sep && <div className={`${grp.sep} flex items-center pl-[10px] pr-[2px]`}><div className="h-px w-full bg-[#424242]" /></div>}
              {grp.items.map((ic, i) => <div key={i} className="h-[35px] flex items-center pl-[18px]">{ic}</div>)}
            </div>
          ))}
        </div>
      </div>
      {/* palette */}
      <div className="h-[35px] shrink-0 flex items-end relative bg-[#363636]">
        <div className="w-[33px] h-[33px] ml-px shrink-0 bg-white self-start">
          <svg width="33" height="33" viewBox="0 0 33 33"><circle cx="16.5" cy="16.5" r="8" fill="#9a9a9a" /><path d="M2 2 L31 31 M31 2 L2 31" stroke="#c1272d" strokeWidth="2.4" /></svg>
        </div>
        <div className="w-[33px] h-[33px] ml-px mr-px shrink-0 bg-[#0000ff] self-start" />
        <div className="flex h-[16px] mb-[2px]">
          {PALETTE.map((c, i) => (
            <div key={i} className="w-[17px] h-[16px] flex items-center justify-center" style={{ backgroundColor: c }}>
              {i === 0 && <div className="w-[9px] h-[9px] rounded-full border border-[#d8d8d8]" />}
            </div>
          ))}
        </div>
        <div className="absolute left-[1846px] top-[14px]"><svg width="12" height="8" viewBox="0 0 12 8" fill="none"><path d="M1 7 L6 2 L11 7" stroke={W} strokeWidth="2" /></svg></div>
        <div className="absolute left-[1877px] top-[13px]"><svg width="12" height="8" viewBox="0 0 12 8" fill="none"><path d="M1 1 L6 6 L11 1" stroke={W} strokeWidth="2" /></svg></div>
        <div className="absolute left-[1900px] top-[7px] w-[18px] h-[27px] rounded-[4px] border border-[#1e1e1e] flex flex-col items-center justify-center gap-[2px]">
          <div className="w-[14px] h-[2px] bg-white" /><div className="w-[14px] h-[2px] bg-white" /><div className="w-[14px] h-[2px] bg-white" />
        </div>
      </div>
      {/* status bar */}
      <div className="h-[42px] shrink-0 flex bg-[#363636] text-[14.5px]">
        <div className="w-[55px] shrink-0 flex flex-col items-end pr-[1px] pt-[3px] gap-[1px] text-[#dcdcdc]">
          <span className="h-[20px] leading-[20px]">Relleno:</span>
          <span className="h-[20px] leading-[20px]">Trazo:</span>
        </div>
        <div className="w-[77px] shrink-0 ml-[16px] flex flex-col pt-[2px]">
          <span className="h-[20px] leading-[20px] italic">Ninguno</span>
          <div className="w-[55px] h-[20px] flex gap-px rounded-[3px] overflow-hidden bg-[#333] mt-px"><div className="flex-1 bg-black" /><div className="flex-1 bg-black" /></div>
        </div>
        <span className="-ml-[16px] mt-[24px] w-[39px] leading-[20px] shrink-0">0.500</span>
        <div className="w-[16px] shrink-0 mt-[12px] leading-[20px]">O:</div>
        <div><Spin value="100" w="w-[72px]" h="h-[41px]" pad="pl-[6px]" incDim /></div>
        <div className="ml-[13px] mt-[10px] w-[3px] h-[21px] bg-[#2f6fd8]" />
        <div className="ml-[6px] w-[51px] leading-[44px]">Capa 1</div>
        <div className="w-[40px] ml-[4px] flex justify-center items-center h-[41px]">
          <svg width="18" height="15" viewBox="0 0 20 16" fill="none"><path d="M2 8 Q10 -1 18 8 Q10 15 2 8Z" stroke={W} strokeWidth="2" /><circle cx="10" cy="8" r="3" fill={W} /><path d="M3 1 L5 3 M17 1 L15 3" stroke={W} strokeWidth="1.6" /></svg>
        </div>
        <div className="w-[30px] ml-[2px] flex justify-center items-center h-[41px]">
          <svg width="14" height="18" viewBox="0 0 14 18"><rect x="1" y="8" width="10" height="9" fill={W} /><path d="M8 8 V5 A3 3 0 0 1 13 5 V6" stroke={W} strokeWidth="1.8" fill="none" /></svg>
        </div>
        <div className="ml-[3px] w-px h-[41px] bg-[#404040]" />
        <div className="ml-[7px] w-[1150px] leading-[44px] text-[15px] text-[#e4e4e4] whitespace-nowrap">
          <b className="text-[#f6f6f6]">Mover:</b> -19.92 mm, 48.93 mm; con <b className="text-[#f6f6f6]">Ctrl</b> para restringir a la horizontal/vertical; con <b className="text-[#f6f6f6]">Shift</b> para desactivar el ajuste
        </div>
        <div className="absolute left-[1574px] top-[978px] w-px h-[42px] bg-[#404040]" />
        <div className="absolute left-[1584px] top-[981px] w-[69px] flex flex-col">
          <div className="flex justify-between h-[20px] leading-[20px]"><span>X:</span><span>119.26</span></div>
          <div className="flex justify-between h-[20px] leading-[20px]"><span>Y:</span><span>231.64</span></div>
        </div>
        <div className="absolute left-[1664px] top-[978px] flex items-center h-[41px] gap-[1px]">
          <span className="w-[10px]">Z:</span>
          <Spin value="69%" w="w-[100px]" h="h-[41px]" pad="pl-[12px]" cell="w-[21px]" />
          <span className="ml-[9px] w-[13px]">R:</span>
          <Spin value="0.00°" w="w-[107px]" h="h-[41px]" pad="pl-[14px]" cell="w-[21px]" />
        </div>
      </div>
      {/* taskbar */}
      <div className="h-[60px] shrink-0 bg-[#dcdcdc] border-t border-[#c8c8c8] relative flex items-center text-[#1a1a1a]">
        <div className="ml-[26px] w-[29px] h-[29px] grid grid-cols-2 gap-[1.5px]">
          <div className="bg-[#3fc0f4]" /><div className="bg-[#27a6ea]" /><div className="bg-[#1a8fdf]" /><div className="bg-[#0a76cf]" />
        </div>
        <div className="ml-[20px] w-[143px] h-[38px] rounded-full bg-[#f6f6f6] border border-[#e6e6e6] flex items-center pl-[26px] gap-[7px] text-[14.5px]">
          <Search size={17} strokeWidth={2} color="#1a1a1a" />
          <span>Búsqueda</span>
        </div>
        <div className="ml-[3px] flex items-center">
          <TaskIcon w="w-[55px]">
            <div className="w-[24px] h-[30px] rounded-[50%] bg-[linear-gradient(160deg,#ffd21a,#f07a10)]" />
            <div className="absolute left-[22px] top-[1px] w-[20px] h-[20px] rounded-full bg-[#c42b1c] text-white text-[12px] font-bold flex items-center justify-center">1</div>
          </TaskIcon>
          <TaskIcon w="w-[55px]" dot>
            <svg width="32" height="30" viewBox="0 0 32 30"><path d="M1 3 Q1 1 3 1 H12 L15 5 H30 Q31 5 31 7 V28 H1Z" fill="#e0a010" /><rect x="1" y="6" width="30" height="23" rx="1" fill="#fdcb4d" /><rect x="9" y="19" width="14" height="6" rx="1" fill="#1478c8" /></svg>
          </TaskIcon>
          <TaskIcon w="w-[55px]" dot>
            <svg width="30" height="30" viewBox="0 0 30 30">
              <path d="M15 1 A14 14 0 0 1 27.1 8 H15 A7 7 0 0 0 8.9 11.5 L3 7 A14 14 0 0 1 15 1Z" fill="#e33b2e" />
              <path d="M27.1 8 A14 14 0 0 1 15 29 L21 18.5 A7 7 0 0 0 21 11.5 Z" fill="#fcc31e" />
              <path d="M3 7 A14 14 0 0 0 15 29 L21 18.5 A7 7 0 0 1 8.9 18.5Z" fill="#2f9e44" />
              <circle cx="15" cy="15" r="6.5" fill="#fff" /><circle cx="15" cy="15" r="5.2" fill="#1a73e8" />
            </svg>
          </TaskIcon>
          <TaskIcon w="w-[56px]">
            <svg width="32" height="32" viewBox="0 0 32 32" fill="none"><rect x="1" y="1" width="18" height="18" rx="2" fill="#e9e9e9" /><rect x="4" y="4" width="10" height="10" stroke="#d04030" strokeWidth="2" strokeDasharray="2 1" /><path d="M13 10 L19 22 M23 12 L17 24" stroke="#9a9a9a" strokeWidth="2" /><circle cx="16" cy="27" r="3" stroke="#1478c8" strokeWidth="2" /><circle cx="27" cy="21" r="3" stroke="#1478c8" strokeWidth="2" /></svg>
          </TaskIcon>
          <TaskIcon w="w-[55px]">
            <svg width="30" height="30" viewBox="0 0 30 30"><circle cx="15" cy="15" r="15" fill="#fff" /><path d="M8 19 A9 9 0 0 1 21 7 Z" fill="#2a2a2a" /><path d="M10 24 L23 10 A9.5 9.5 0 0 1 10 24Z" fill="#e8682c" /></svg>
          </TaskIcon>
          <TaskIcon w="w-[55px]" dot>
            <svg width="30" height="30" viewBox="0 0 30 30"><path d="M21 1 L29 5 V25 L21 29 L8 17 L3 21 L1 19 L6 15 L1 11 L3 9 L8 13Z M21 9 L13 15 L21 21Z" fill="#0e7fd0" fillRule="evenodd" /><path d="M21 1 L29 5 V25 L21 29Z M21 9 V21 L13 15Z" fill="#23a0ea" fillRule="evenodd" /></svg>
          </TaskIcon>
          <TaskIcon w="w-[55px]" dot>
            <div className="w-[28px] h-[30px] rounded-[5px] bg-[#3340b8] flex items-center justify-center text-white font-bold text-[20px] leading-none font-['Inter',sans-serif]">Ki</div>
          </TaskIcon>
          <TaskIcon w="w-[55px]">
            <div className="relative w-[30px] h-[32px]">
              <span className="absolute left-[1px] -top-[4px] text-[#c8201c] font-bold text-[34px] leading-[38px] font-['Liberation_Serif',serif]">F</span>
              <Settings size={19} fill="#4c78b0" color="#35598a" className="absolute right-[-2px] bottom-[0px]" />
            </div>
          </TaskIcon>
          <TaskIcon w="w-[55px]" dot>
            <div className="relative w-[30px] h-[30px]">
              <div className="absolute left-[2px] top-0 w-[28px] h-[30px] rounded-[3px] overflow-hidden flex flex-col">
                <div className="flex-1 bg-[#41a5ee]" /><div className="flex-1 bg-[#2b7cd3]" /><div className="flex-1 bg-[#185abd]" /><div className="flex-1 bg-[#103f91]" />
              </div>
              <div className="absolute left-0 top-[7px] w-[16px] h-[16px] rounded-[2px] bg-[#185abd] flex items-center justify-center text-white font-bold text-[11px]">W</div>
            </div>
          </TaskIcon>
          <TaskIcon w="w-[48px] mx-[3px]" active><InkLogo s={36} /></TaskIcon>
          <TaskIcon w="w-[55px] -ml-[1px]" dot>
            <div className="w-[28px] h-[30px] rounded-[4px] bg-[#ad0e0e] flex items-center justify-center">
              <svg width="20" height="22" viewBox="0 0 20 22" fill="none"><path d="M2 19 Q6 16 9 8 Q10 2 9 2 Q7 2 9 9 Q11 14 18 15 Q12 14 6 17 Q3 19 2 19Z" stroke="#fff" strokeWidth="1.6" /></svg>
            </div>
          </TaskIcon>
          <TaskIcon w="w-[54px]" dot>
            <div className="relative w-[30px] h-[30px]">
              <div className="absolute left-[2px] top-0 w-[28px] h-[30px] rounded-full bg-[linear-gradient(to_right,#d35230_50%,#ff8f6b_50%)]" />
              <div className="absolute left-0 top-[7px] w-[16px] h-[16px] rounded-[2px] bg-[#c43e1c] flex items-center justify-center text-white font-bold text-[11px]">P</div>
            </div>
          </TaskIcon>
        </div>
        <div className="absolute left-[1515px] top-[20px]"><ChevronUp size={18} color="#1a1a1a" /></div>
        <div className="absolute left-[1553px] top-[17px]">
          <svg width="22" height="24" viewBox="0 0 22 24" fill="none"><circle cx="13" cy="9" r="6.5" stroke="#e8721c" strokeWidth="3" /><circle cx="13" cy="9" r="2" fill="#e8721c" /><path d="M8 14 L2 21" stroke="#e8721c" strokeWidth="3.5" /></svg>
        </div>
        <div className="absolute left-[1596px] top-[18px]">
          <svg width="14" height="24" viewBox="0 0 14 24" fill="none" stroke="#1a1a1a"><rect x="1.5" y="7.5" width="9" height="15" rx="1" /><rect x="3" y="1.5" width="6" height="6" /><path d="M5 4 h0.5 M7 4 h0.5" /><path d="M9 20 L11 22 L13 18" /></svg>
        </div>
        <div className="absolute left-[1630px] top-[11px] w-[42px] flex flex-col items-center text-[14.5px] leading-[20px]">
          <span>ESP</span><span>LAA</span>
        </div>
        <div className="absolute left-[1687px] top-[20px]"><Wifi size={20} color="#1a1a1a" /></div>
        <div className="absolute left-[1718px] top-[20px]"><Volume2 size={20} color="#1a1a1a" strokeWidth={1.5} /></div>
        <div className="absolute left-[1748px] top-[19px]">
          <svg width="21" height="20" viewBox="0 0 21 20" fill="none"><rect x="1.5" y="5.5" width="16" height="11" rx="2" stroke="#1a1a1a" strokeWidth="1.4" /><rect x="6" y="7" width="10" height="8" fill="#1a1a1a" /><rect x="18" y="8" width="2" height="5" fill="#1a1a1a" /><path d="M5 1 L2 7 H5 L4 11 L8 5 H5Z" fill="#1a1a1a" /></svg>
        </div>
        <div className="absolute right-[54px] top-[10px] flex flex-col items-end text-[14.5px] leading-[20px]">
          <span>10:05 a.m.</span><span>02/10/2024</span>
        </div>
        <div className="absolute left-[1875px] top-[18px]"><Bell size={21} fill="#0a56b8" color="#0a56b8" /></div>
      </div>
    </div>
  );
}
